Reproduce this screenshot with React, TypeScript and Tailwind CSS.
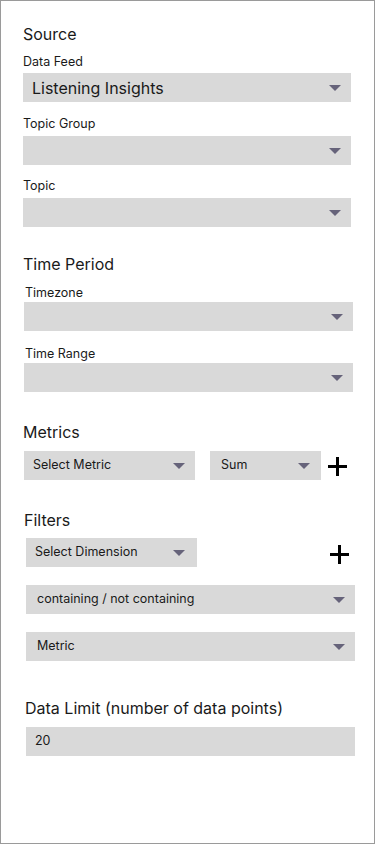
import React from "react";

const Caret = () => (
  <svg width="12" height="6" viewBox="0 0 12 6" className="mt-[1px] shrink-0">
    <polygon points="0,0 12,0 6,6" fill="#66637a" />
  </svg>
);

const Plus = ({ className = "" }: { className?: string }) => (
  <svg width="19" height="19" viewBox="0 0 19 19" className={`shrink-0 ${className}`}>
    <rect x="8" y="0" width="3" height="19" fill="#000" />
    <rect x="0" y="8" width="19" height="3" fill="#000" />
  </svg>
);

const Select = ({
  value,
  className = "",
  textClass = "text-[12.5px] pl-[11px]",
  caretRight = "pr-[10px]",
}: {
  value?: string;
  className?: string;
  textClass?: string;
  caretRight?: string;
}) => (
  <div className={`h-[29px] bg-[#d9d9d9] flex items-center justify-between ${caretRight} ${className}`}>
    <span className={`whitespace-nowrap text-[#1a1a1a] ${textClass}`}>{value}</span>
    <Caret />
  </div>
);

const Title = ({ children, className = "" }: { children: React.ReactNode; className?: string }) => (
  <h2 className={`text-[16px] leading-[20px] text-[#1a1a1a] ${className}`}>{children}</h2>
);

const Label = ({ children, className = "" }: { children: React.ReactNode; className?: string }) => (
  <div className={`text-[12.5px] leading-[16px] text-[#1a1a1a] ${className}`}>{children}</div>
);

export default function App() {
  return (
    <div className="w-[375px] h-[844px] border border-[#9a9a9a] bg-white pl-[22px] pt-[23px] font-[family-name:Inter,Liberation_Sans,sans-serif]">
      {/* source */}
      <Title>Source</Title>
      <Label className="mt-[10px]">Data Feed</Label>
      <Select
        value="Listening Insights"
        className="mt-[3px] w-[328px]"
        textClass="text-[16px] pl-[9px]"
      />
      <Label className="mt-[14px]">Topic Group</Label>
      <Select className="mt-[4px] w-[328px]" />
      <Label className="mt-[13px]">Topic</Label>
      <Select className="mt-[4px] w-[328px]" />

      {/* time period */}
      <Title className="mt-[27px]">Time Period</Title>
      <Label className="mt-[11px] ml-[2px]">Timezone</Label>
      <Select className="mt-[1px] ml-[1px] w-[329px]" />
      <Label className="mt-[15px] ml-[2px]">Time Range</Label>
      <Select className="mt-[1px] ml-[1px] w-[329px]" />

      {/* metrics */}
      <Title className="mt-[30px]">Metrics</Title>
      <div className="mt-[9px] ml-[1px] flex items-center">
        <Select value="Select Metric" className="w-[171px]" textClass="text-[12.5px] pl-[9px]" />
        <Select value="Sum" className="ml-[15px] w-[111px]" textClass="text-[12.5px] pl-[11px]" caretRight="pr-[11px]" />
        <Plus className="ml-[7px] mt-[1px]" />
      </div>

      {/* filters */}
      <Title className="mt-[30px] ml-[1px]">Filters</Title>
      <div className="mt-[8px] ml-[3px] flex items-center">
        <Select value="Select Dimension" className="w-[171px]" textClass="text-[12.5px] pl-[9px]" caretRight="pr-[12px]" />
        <Plus className="ml-[133px] mt-[4px]" />
      </div>
      <Select value="containing / not containing" className="mt-[18px] ml-[3px] w-[329px]" />
      <Select value="Metric" className="mt-[18px] ml-[3px] w-[329px]" />

      {/* data limit */}
      <Title className="mt-[37px] ml-[2px]">Data Limit (number of data points)</Title>
      <div className="mt-[9px] ml-[3px] w-[329px] h-[29px] bg-[#d9d9d9] flex items-center pl-[9px] text-[12.5px] text-[#1a1a1a]">
        20
      </div>
    </div>
  );
}
